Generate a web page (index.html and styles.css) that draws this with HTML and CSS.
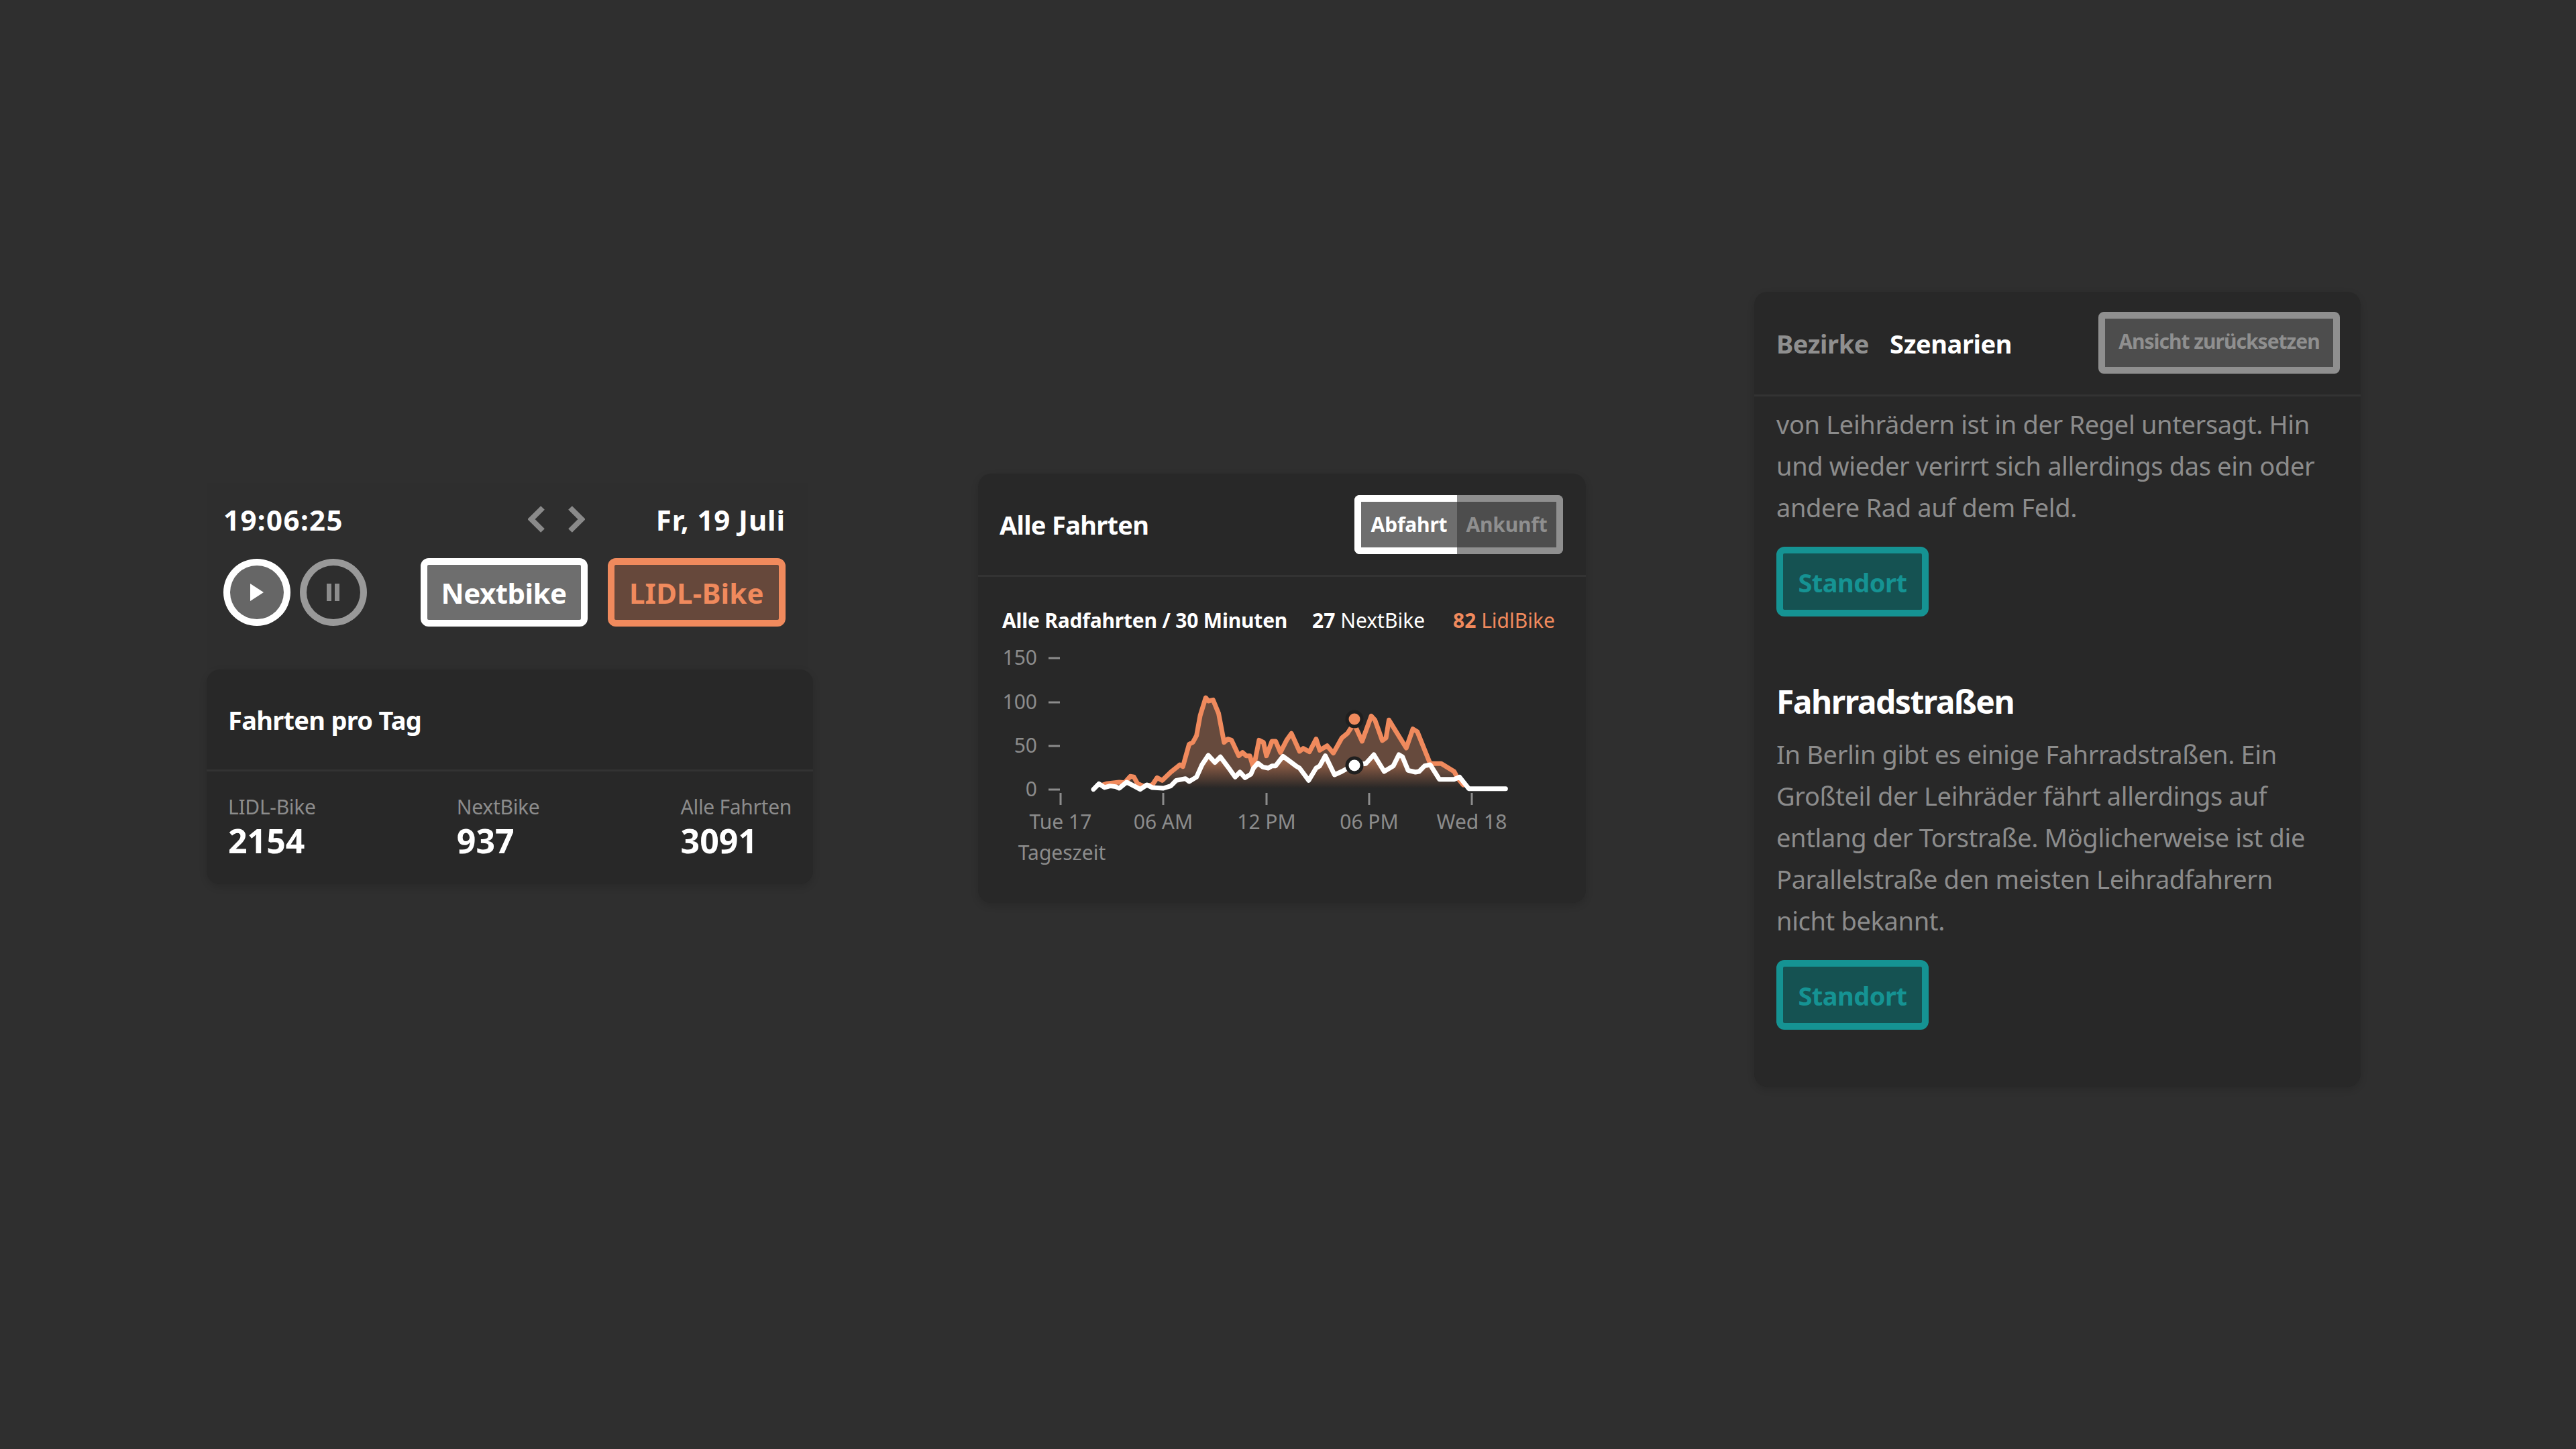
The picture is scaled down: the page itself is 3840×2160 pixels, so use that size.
FILE: index.html
```html
<!DOCTYPE html>
<html lang="en">
<head>
    <meta charset="UTF-8">
    <meta name="viewport" content="width=device-width, initial-scale=1.0">
    <title>Fahrten Dashboard</title>
    <link rel="stylesheet" href="styles.css">
</head>
<body>
    <div class="page">
        <div class="column-left">
            <div class="controls">
                <div class="controls-top">
                    <span class="time">19:06:25</span>
                    <div class="arrows">
                        <svg width="26" height="40" viewBox="0 0 26 40"><path d="M22 3 L5 20 L22 37" class="arrow"/></svg>
                        <svg width="26" height="40" viewBox="0 0 26 40"><path d="M4 3 L21 20 L4 37" class="arrow"/></svg>
                    </div>
                    <span class="date">Fr, 19 Juli</span>
                </div>
                <div class="controls-bottom">
                    <div class="round-btn round-active">
                        <svg width="22" height="26" viewBox="0 0 22 26"><path d="M1 0 L21 13 L1 26 Z" fill="#fff"/></svg>
                    </div>
                    <div class="round-btn round-idle">
                        <svg width="22" height="26" viewBox="0 0 22 26"><rect x="1" y="0" width="7" height="26" fill="#8c8c8c"/><rect x="13" y="0" width="7" height="26" fill="#8c8c8c"/></svg>
                    </div>
                    <div class="bike-btn bike-next">Nextbike</div>
                    <div class="bike-btn bike-lidl">LIDL-Bike</div>
                </div>
            </div>
            <div class="card stats-card">
                <div class="card-head stats-head">
                    <h2 class="card-title">Fahrten pro Tag</h2>
                </div>
                <div class="stats">
                    <div class="stat"><span class="stat-label">LIDL-Bike</span><span class="stat-value">2154</span></div>
                    <div class="stat"><span class="stat-label">NextBike</span><span class="stat-value">937</span></div>
                    <div class="stat"><span class="stat-label">Alle Fahrten</span><span class="stat-value">3091</span></div>
                </div>
            </div>
        </div>

        <div class="card chart-card">
            <div class="card-head chart-head">
                <h2 class="card-title">Alle Fahrten</h2>
                <div class="toggle">
                    <span class="toggle-item toggle-on">Abfahrt</span>
                    <span class="toggle-item toggle-off">Ankunft</span>
                </div>
            </div>
            <div class="legend">
                <span class="legend-title">Alle Radfahrten / 30 Minuten</span>
                <span class="legend-next"><b>27</b> NextBike</span>
                <span class="legend-lidl"><b>82</b> LidlBike</span>
            </div>
            <svg class="chart" width="860" height="340" viewBox="0 0 860 340">
                <defs>
                    <linearGradient id="lidlFill" gradientUnits="userSpaceOnUse" x1="0" y1="600" x2="0" y2="672">
                        <stop offset="0" stop-color="#664a3d"/>
                        <stop offset="1" stop-color="#2a2827"/>
                    </linearGradient>
                    <linearGradient id="nextFill" gradientUnits="userSpaceOnUse" x1="0" y1="540" x2="0" y2="672">
                        <stop offset="0" stop-color="#a3694d"/>
                        <stop offset="1" stop-color="#2a2827"/>
                    </linearGradient>
                </defs>
                <g class="axis">
                    <text x="86" y="41" text-anchor="end">150</text>
                    <text x="86" y="107" text-anchor="end">100</text>
                    <text x="86" y="172" text-anchor="end">50</text>
                    <text x="86" y="237" text-anchor="end">0</text>
                    <path d="M103 31 H120 M103 97 H120 M103 162 H120 M103 227 H120"/>
                    <path d="M121 232 V250 M274 232 V250 M428 232 V250 M581 232 V250 M734 232 V250"/>
                    <text x="121" y="286" text-anchor="middle">Tue 17</text>
                    <text x="274" y="286" text-anchor="middle">06 AM</text>
                    <text x="428" y="286" text-anchor="middle">12 PM</text>
                    <text x="581" y="286" text-anchor="middle">06 PM</text>
                    <text x="734" y="286" text-anchor="middle">Wed 18</text>
                    <text x="123" y="332" text-anchor="middle">Tageszeit</text>
                </g>
                <!-- points are read off the picture, scaled to the chart box -->
                <g transform="scale(0.5485 0.3333)">
                    <polygon fill="url(#lidlFill)" points="335,675 335,660 345,655 380,648 395,650 410,622 420,625 430,655 445,665 470,660 483,628 497,640 520,603 545,570 553,578 570,478 580,470 590,440 600,350 615,270 622,285 635,280 650,340 665,470 675,455 685,460 705,530 715,515 725,530 735,530 745,585 760,460 772,470 780,530 795,465 805,465 818,515 835,460 848,430 870,510 880,497 897,512 915,455 925,505 945,485 962,518 985,450 1000,430 1018,385 1040,465 1065,352 1075,370 1095,462 1105,450 1113,370 1160,495 1178,410 1190,422 1225,565 1255,565 1290,600 1300,630 1315,660 1315,675"/>
                    <polygon fill="url(#nextFill)" points="540,675 540,636 560,632 570,645 590,625 605,570 622,528 640,560 655,535 680,590 695,625 708,603 722,628 738,612 745,585 757,563 770,580 785,585 795,575 805,575 825,532 840,550 860,575 870,585 895,640 915,585 925,575 940,530 965,615 985,600 1018,570 1050,565 1072,525 1100,600 1125,575 1140,525 1150,535 1165,595 1185,603 1195,600 1210,575 1225,570 1250,635 1290,635 1290,675"/>
                    <polyline class="line line-lidl" points="335,660 345,655 380,648 395,650 410,622 420,625 430,655 445,665 470,660 483,628 497,640 520,603 545,570 553,578 570,478 580,470 590,440 600,350 615,270 622,285 635,280 650,340 665,470 675,455 685,460 705,530 715,515 725,530 735,530 745,585 760,460 772,470 780,530 795,465 805,465 818,515 835,460 848,430 870,510 880,497 897,512 915,455 925,505 945,485 962,518 985,450 1000,430 1018,385 1040,465 1065,352 1075,370 1095,462 1105,450 1113,370 1160,495 1178,410 1190,422 1225,565 1255,565 1290,600 1300,630 1315,660"/>
                    <polyline class="line line-next" points="310,680 325,655 340,672 355,665 370,668 380,675 400,648 420,665 437,680 455,660 470,672 500,675 520,665 535,640 560,632 570,645 590,625 605,570 622,528 640,560 655,535 680,590 695,625 708,603 722,628 738,612 745,585 757,563 770,580 785,585 795,575 805,575 825,532 840,550 860,575 870,585 895,640 915,585 925,575 940,530 965,615 985,600 1018,570 1050,565 1072,525 1100,600 1125,575 1140,525 1150,535 1165,595 1185,603 1195,600 1210,575 1225,570 1250,635 1290,635 1305,625 1330,677 1430,677"/>
                </g>
                <circle class="dot" cx="559" cy="122" r="11" fill="#f08a5d"/>
                <circle class="dot" cx="559" cy="191" r="11" fill="#fff"/>
            </svg>
        </div>

        <div class="card text-card">
            <div class="card-head text-head">
                <div class="tabs">
                    <span class="tab tab-off">Bezirke</span>
                    <span class="tab">Szenarien</span>
                </div>
                <div class="reset-btn">Ansicht zurücksetzen</div>
            </div>
            <div class="text-body">
                <p class="copy">von Leihrädern ist in der Regel untersagt. Hin und wieder verirrt sich allerdings das ein oder andere Rad auf dem Feld.</p>
                <div class="place-btn">Standort</div>
                <h3 class="section-title">Fahrradstraßen</h3>
                <p class="copy">In Berlin gibt es einige Fahrradstraßen. Ein Großteil der Leihräder fährt allerdings auf entlang der Torstraße. Möglicherweise ist die Parallelstraße den meisten Leihradfahrern nicht bekannt.</p>
                <div class="place-btn">Standort</div>
            </div>
        </div>
    </div>
</body>
</html>
```

FILE: styles.css
```css
* {
    box-sizing: border-box;
}
body {
    margin: 0;
    background-color: #2f2f2f;
    font-family: "Noto Sans", "Open Sans", sans-serif;
    color: #fff;
}
.page {
    display: flex;
    align-items: center;
    height: 2160px;
    padding: 0 0 110px 308px;
}
.column-left {
    width: 904px;
    margin: 0 246px 12px 0;
}
.controls {
    width: 897px;
    height: 278px;
    padding: 29px 34px 0 25px;
    background-color: #2e2e2e;
}
.controls-top {
    display: flex;
    align-items: center;
    height: 50px;
}
.time {
    font-size: 42px;
    font-weight: 700;
    letter-spacing: 1.4px;
    width: 454px;
}
.arrows {
    display: flex;
    gap: 33px;
}
.arrow {
    fill: none;
    stroke: #8a8a8a;
    stroke-width: 8;
}
.date {
    margin-left: auto;
    font-size: 42px;
    font-weight: 700;
    letter-spacing: 0.9px;
}
.controls-bottom {
    display: flex;
    align-items: center;
    margin-top: 33px;
}
.round-btn {
    display: flex;
    align-items: center;
    justify-content: center;
    width: 100px;
    height: 100px;
    border-radius: 50%;
    border: 10px solid #999;
    margin-right: 14px;
}
.round-active {
    border-color: #fff;
    background-color: #666;
}
.round-idle {
    margin-right: 80px;
}
.bike-btn {
    display: flex;
    align-items: center;
    justify-content: center;
    height: 102px;
    border-radius: 12px;
    border: 10px solid #fff;
    font-size: 42px;
    font-weight: 700;
}
.bike-next {
    width: 250px;
    background-color: #6e6e6e;
    margin-right: 30px;
    letter-spacing: -0.5px;
}
.bike-lidl {
    width: 266px;
    border-color: #f08a5d;
    background-color: #66483b;
    color: #f08a5d;
    letter-spacing: 0.2px;
}
.card {
    background-color: #282828;
    border-radius: 20px;
    box-shadow: 0 4px 12px rgba(0, 0, 0, 0.14);
}
.card-head {
    display: flex;
    align-items: center;
    border-bottom: 3px solid #333;
}
.card-title {
    margin: 0;
    font-size: 38px;
    font-weight: 700;
    letter-spacing: -0.7px;
}
.stats-card {
    height: 320px;
}
.stats-head {
    height: 152px;
    padding-left: 32px;
}
.stats {
    display: flex;
    justify-content: space-between;
    padding: 32px 32px 0;
}
.stat {
    display: flex;
    flex-direction: column;
}
.stat-label {
    font-size: 30px;
    letter-spacing: -0.3px;
    color: #8c8c8c;
}
.stat-value {
    font-size: 50px;
    font-weight: 700;
    line-height: 60px;
}
.chart-card {
    width: 906px;
    height: 640px;
    margin: 2px 251px 0 0;
}
.chart-head {
    justify-content: space-between;
    height: 154px;
    padding: 0 34px 0 32px;
}
.toggle {
    display: flex;
    height: 88px;
}
.toggle-item {
    display: flex;
    align-items: center;
    justify-content: center;
    border: 10px solid #fff;
    font-size: 30px;
    font-weight: 700;
    letter-spacing: -0.2px;
}
.toggle-on {
    width: 153px;
    border-right: 0;
    border-radius: 8px 0 0 8px;
    background-color: #6e6e6e;
}
.toggle-off {
    width: 158px;
    border-color: #8f8f8f;
    border-left: 0;
    border-radius: 0 8px 8px 0;
    background-color: #4d4d4d;
    color: #8f8f8f;
}
.legend {
    display: flex;
    font-size: 30px;
    padding: 47px 0 0 36px;
    line-height: 36px;
}
.legend b {
    font-weight: 700;
}
.legend-title {
    font-weight: 700;
    letter-spacing: -0.2px;
    width: 462px;
}
.legend-next {
    width: 210px;
}
.legend-lidl {
    color: #f08a5d;
}
.chart {
    display: block;
    margin: 7px 0 0 2px;
}
.axis text {
    font-size: 30px;
    fill: #8c8c8c;
}
.axis path {
    fill: none;
    stroke: #8c8c8c;
    stroke-width: 3;
}
.line {
    fill: none;
    stroke-width: 7;
    stroke-linejoin: round;
    stroke-linecap: round;
    vector-effect: non-scaling-stroke;
}
.line-lidl {
    stroke: #f08a5d;
}
.line-next {
    stroke: #fff;
}
.dot {
    stroke: #1f1f1f;
    stroke-width: 5;
}
.text-card {
    width: 904px;
    height: 1185px;
    margin-top: 4px;
}
.text-head {
    justify-content: space-between;
    height: 156px;
    padding: 0 31px 0 33px;
}
.tabs {
    display: flex;
    gap: 31px;
    margin-top: 2px;
}
.tab {
    font-size: 38px;
    font-weight: 700;
    letter-spacing: -0.4px;
}
.tab-off {
    color: #8f8f8f;
}
.reset-btn {
    width: 360px;
    height: 92px;
    padding-top: 13px;
    border: 10px solid #8f8f8f;
    border-radius: 8px;
    background-color: #4d4d4d;
    color: #8f8f8f;
    font-size: 30px;
    font-weight: 700;
    letter-spacing: -1px;
    text-align: center;
}
.text-body {
    padding: 10px 50px 0 33px;
}
.copy {
    margin: 0;
    font-size: 38px;
    line-height: 62px;
    letter-spacing: -0.35px;
    color: #8c8c8c;
}
.place-btn {
    display: flex;
    align-items: center;
    justify-content: center;
    width: 227px;
    height: 104px;
    margin-top: 28px;
    padding-top: 3px;
    border: 10px solid #159393;
    border-radius: 12px;
    background-color: #155252;
    color: #159393;
    font-size: 38px;
    font-weight: 700;
    letter-spacing: -0.5px;
}
.section-title {
    margin: 96px 0 16px;
    font-size: 48px;
    font-weight: 700;
    letter-spacing: -1.5px;
    line-height: 62px;
}
```
